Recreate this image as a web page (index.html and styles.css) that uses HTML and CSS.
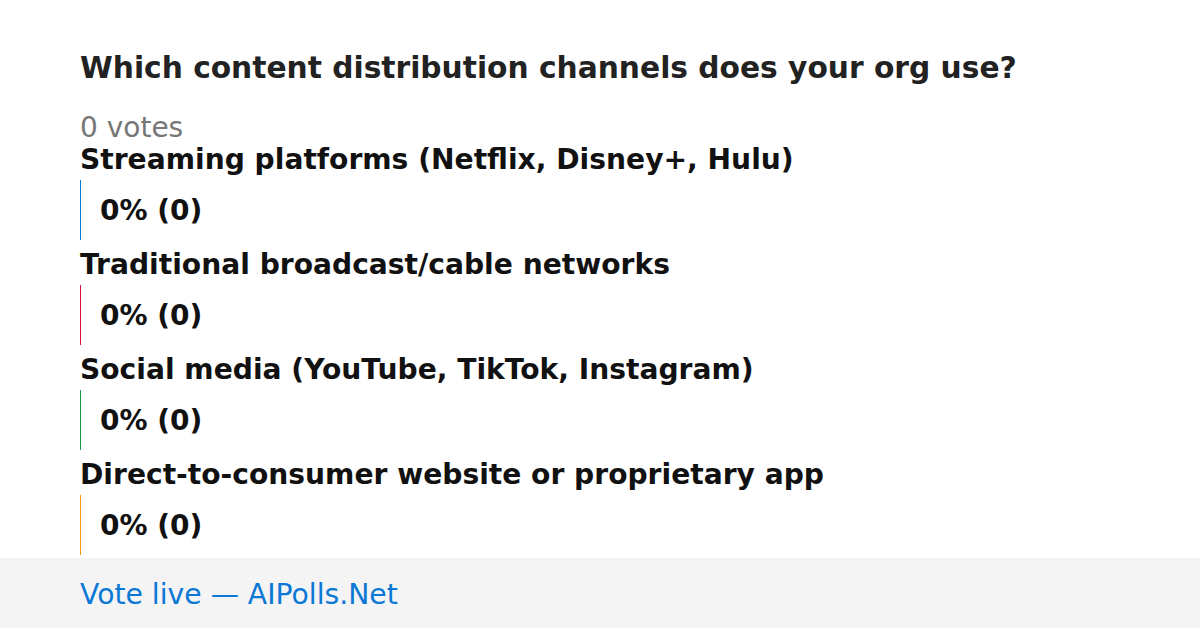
FILE: index.html
```html
<!DOCTYPE html>
<html>
<head>
<meta charset="utf-8">
<link rel="stylesheet" href="styles.css">
</head>
<body>
<main class="poll">
  <h1 class="title">Which content distribution channels does your org use?</h1>
  <div class="votes">0 votes</div>
  <div class="option">
    <div class="label">Streaming platforms (Netflix, Disney+, Hulu)</div>
    <div class="bar blue">0% (0)</div>
  </div>
  <div class="option">
    <div class="label">Traditional broadcast/cable networks</div>
    <div class="bar red">0% (0)</div>
  </div>
  <div class="option">
    <div class="label">Social media (YouTube, TikTok, Instagram)</div>
    <div class="bar green">0% (0)</div>
  </div>
  <div class="option">
    <div class="label">Direct-to-consumer website or proprietary app</div>
    <div class="bar orange">0% (0)</div>
  </div>
</main>
<footer class="footer">Vote live — AIPolls.Net</footer>
</body>
</html>
```
FILE: styles.css
```css
html, body {
  margin: 0;
  padding: 0;
  background: #fff;
  font-family: "DejaVu Sans", sans-serif;
  width: 1200px;
  height: 628px;
  overflow: hidden;
}
body {
  display: flex;
  flex-direction: column;
}
.poll {
  flex: 1;
  min-height: 0;
  overflow: hidden;
  padding: 50px 80px 0;
}
.title {
  margin: 0;
  font-size: 29.7px;
  font-weight: bold;
  color: #222;
  line-height: 36px;
}
.votes {
  margin-top: 26px;
  font-size: 28px;
  color: #777;
  line-height: 32px;
}
.option {
  display: flex;
  flex-direction: column;
}
.label {
  font-size: 28.15px;
  font-weight: bold;
  color: #111;
  line-height: 32px;
}
.bar {
  margin: 4px 0 9px;
  height: 60px;
  display: flex;
  align-items: center;
  padding-left: 19px;
  border-left: 1px solid;
  font-size: 28px;
  font-weight: bold;
  color: #111;
}
.blue { border-color: #0a7bd6; }
.red { border-color: #d6143c; }
.green { border-color: #1a9a48; }
.orange { border-color: #f59a0c; }
.footer {
  flex: none;
  box-sizing: border-box;
  height: 70px;
  background: #f4f4f4;
  display: flex;
  align-items: center;
  padding: 3px 0 0 80px;
  font-size: 28.25px;
  color: #0a78d4;
}
```
